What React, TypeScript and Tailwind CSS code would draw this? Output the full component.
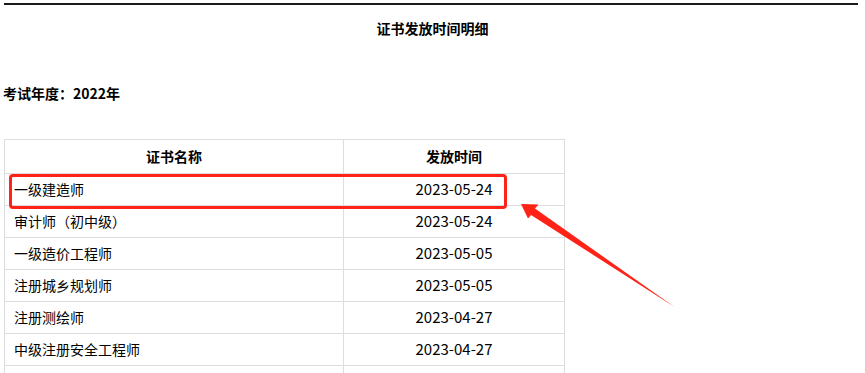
const rows: { name: string; date: string }[] = [
  { name: "一级建造师", date: "2023-05-24" },
  { name: "审计师（初中级）", date: "2023-05-24" },
  { name: "一级造价工程师", date: "2023-05-05" },
  { name: "注册城乡规划师", date: "2023-05-05" },
  { name: "注册测绘师", date: "2023-04-27" },
  { name: "中级注册安全工程师", date: "2023-04-27" },
  { name: "", date: "" },
];

const App = () => {
  return (
    <div
      className="relative w-[865px] h-[373px] overflow-hidden bg-white text-black"
      style={{ fontFamily: '"Noto Sans CJK SC", "Noto Sans", sans-serif' }}
    >
      <div className="pt-[3px] pl-[4px] pr-[7px]">
        <div className="h-[2px] bg-[#1a1a1a]" />
      </div>

      <h2 className="mt-[13px] text-center text-[14px] leading-[20px] font-bold">
        证书发放时间明细
      </h2>

      <div className="mt-[45px] pl-[3px] text-[14px] leading-[20px] font-bold">
        考试年度：2022年
      </div>

      {/* certificate table */}
      <div className="mt-[36px] ml-[4px] w-[561px] border-t border-l border-r border-[#dddddd] text-[14px]">
        <div className="flex h-[34px] border-b border-[#dddddd] font-bold">
          <div className="w-[339px] border-r border-[#dddddd] flex items-center justify-center">
            证书名称
          </div>
          <div className="flex-1 flex items-center justify-center">发放时间</div>
        </div>
        {rows.map((row, i) => (
          <div key={i} className="flex h-[32px] border-b border-[#dddddd]">
            <div className="w-[339px] border-r border-[#dddddd] flex items-center pl-[9px]">
              {row.name}
            </div>
            <div className="flex-1 flex items-center justify-center text-[15px]">
              {row.date}
            </div>
          </div>
        ))}
      </div>

      {/* highlight box + pointer */}
      <div className="absolute left-[9px] top-[174px] w-[498px] h-[35px] border-[3px] border-[#ff2317] rounded-[4px] pointer-events-none" />
      <svg
        className="absolute left-0 top-0 pointer-events-none"
        width="865"
        height="373"
        viewBox="0 0 865 373"
      >
        <polygon
          points="521,204 538.5,204.5 535,208.5 674.5,307 531,215 528,218.5"
          fill="#ff2317"
        />
      </svg>
    </div>
  );
};

export default App;
